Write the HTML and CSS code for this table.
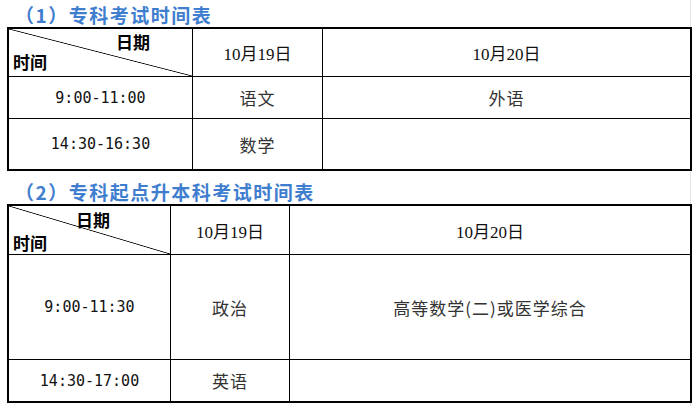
FILE: index.html
```html
<!DOCTYPE html>
<html lang="zh-CN">
<head>
<meta charset="utf-8">
<title>考试时间表</title>
<link rel="stylesheet" href="styles.css">
</head>
<body>
<div class="sheet">
  <div class="title t1-title">（1）专科考试时间表</div>
  <div class="grid g1">
    <div class="cell diag d1">
      <span class="d-date">日期</span>
      <span class="d-time">时间</span>
    </div>
    <div class="cell date">10月19日</div>
    <div class="cell date last">10月20日</div>

    <div class="cell time">9:00-11:00</div>
    <div class="cell subj">语文</div>
    <div class="cell subj last">外语</div>

    <div class="cell time bottom">14:30-16:30</div>
    <div class="cell subj bottom">数学</div>
    <div class="cell subj last bottom"></div>
  </div>

  <div class="title t2-title">（2）专科起点升本科考试时间表</div>
  <div class="grid g2">
    <div class="cell diag d2">
      <span class="d-date">日期</span>
      <span class="d-time">时间</span>
    </div>
    <div class="cell date">10月19日</div>
    <div class="cell date last">10月20日</div>

    <div class="cell time">9:00-11:30</div>
    <div class="cell subj">政治</div>
    <div class="cell subj last">高等数学(二)或医学综合</div>

    <div class="cell time bottom">14:30-17:00</div>
    <div class="cell subj bottom">英语</div>
    <div class="cell subj last bottom"></div>
  </div>
</div>
</body>
</html>
```

FILE: styles.css
```css
html, body {
  margin: 0;
  padding: 0;
  background: #ffffff;
}

body {
  width: 699px;
  height: 406px;
  overflow: hidden;
  font-family: "Noto Sans CJK SC", sans-serif;
}

.sheet {
  width: 691px;
  height: 406px;
  box-sizing: border-box;
  border-right: 1px solid #e3e3e3;
  padding-left: 7px;
}

.title {
  display: flex;
  align-items: flex-end;
  box-sizing: border-box;
  padding-left: 8px;
  padding-bottom: 3px;
  font-family: "Noto Sans CJK SC", sans-serif;
  font-weight: 700;
  font-size: 19px;
  line-height: 19px;
  letter-spacing: 1.5px;
  color: #3f7ecf;
  white-space: nowrap;
}

.t1-title {
  height: 27px;
}

.t2-title {
  height: 33px;
}

.grid {
  display: grid;
  width: 685px;
  box-sizing: border-box;
  border: 2px solid #000;
}

.g1 {
  grid-template-columns: 184px 130px 367px;
  grid-template-rows: 48px 42px 50px;
}

.g2 {
  grid-template-columns: 162px 119px 400px;
  grid-template-rows: 49px 105px 41px;
}

.cell {
  box-sizing: border-box;
  border-right: 1px solid #000;
  border-bottom: 1px solid #000;
  display: flex;
  align-items: center;
  justify-content: center;
  min-width: 0;
}

.cell.last {
  border-right: none;
}

.cell.bottom {
  border-bottom: none;
}

.diag {
  flex-direction: column;
  align-items: stretch;
  justify-content: space-between;
  background: linear-gradient(to bottom left,
    transparent calc(50% - 0.8px),
    #000 50%,
    transparent calc(50% + 0.8px));
  font-family: "Noto Sans CJK SC", sans-serif;
  font-weight: 700;
  font-size: 17px;
  line-height: 20px;
  color: #000;
}

.d1 {
  padding: 3px 0 4px 0;
}

.d1 .d-date {
  align-self: flex-end;
  padding-right: 42px;
}

.d2 {
  padding: 4px 0 1px 0;
}

.d2 .d-date {
  align-self: flex-end;
  padding-right: 60px;
}

.d-time {
  align-self: flex-start;
  padding-left: 4px;
}

.date {
  font-family: "Liberation Serif", "Noto Sans CJK SC", serif;
  font-size: 17px;
  color: #111;
}

.time {
  font-family: "DejaVu Sans Mono", monospace;
  font-size: 15px;
  color: #111;
}

.subj {
  font-family: "Noto Sans CJK SC", sans-serif;
  font-size: 17px;
  letter-spacing: 1px;
  color: #333;
}
```
